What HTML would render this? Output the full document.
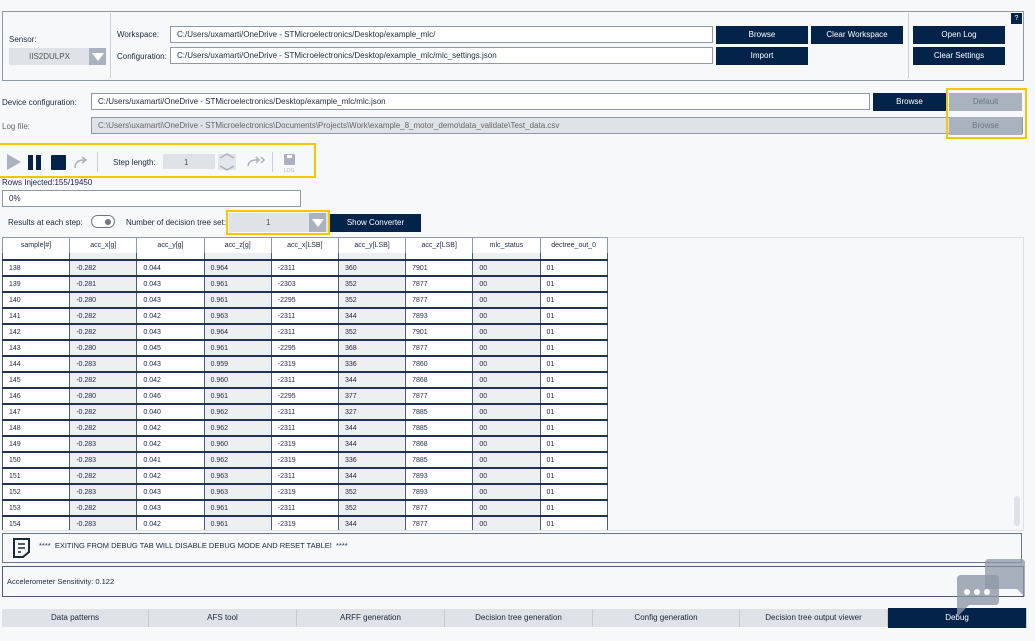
<!DOCTYPE html>
<html><head><meta charset="utf-8"><style>
*{box-sizing:border-box;margin:0;padding:0}
body{width:1035px;height:641px;background:#f7f8fa;font-family:"Liberation Sans",sans-serif;font-size:8px;color:#1a2740;position:relative;overflow:hidden}
.a{position:absolute}
.in{position:absolute;background:#fff;border:1px solid #8d98a8;height:17px;line-height:15px;padding-left:6px;font-size:8px}
.btn{position:absolute;background:#03234b;color:#fff;text-align:center;height:18px;line-height:18px;font-size:8px}
.gb{position:absolute;background:#a9b2be;color:#6b7685;text-align:center;height:18px;line-height:18px;font-size:8px}
.yl{position:absolute;border:2px solid #f9c500}
table{border-collapse:collapse;font-size:7px;table-layout:fixed;width:605px}
td{width:67.2px;height:16px;border-left:1px solid #4a5a78;border-right:1px solid #4a5a78;border-bottom:2px solid #1e3158;padding-left:6px;background:#fff;overflow:hidden;white-space:nowrap}
td:nth-child(2n){background:#eeeff1}
.th td{background:#fff;text-align:center;border:1px solid #8d98a8;height:16px;padding:0}
.tab{position:absolute;top:609px;height:18px;line-height:18px;text-align:center;background:#dfe2e6;color:#1a2740;font-size:8px;border-right:1px solid #c8ccd2}
</style></head><body>
<div class="a" style="left:2px;top:11px;width:1022px;height:70px;border:1px solid #8d98a8"></div>
<div class="a" style="left:110px;top:13px;width:1px;height:65px;background:#ccd"></div>
<div class="a" style="left:908px;top:13px;width:1px;height:65px;background:#ccd"></div>
<div class="a" style="left:9px;top:35px">Sensor:</div>
<div class="a" style="left:9px;top:48px;width:97px;height:17px;background:#dfe2e6;line-height:17px;font-size:8px;color:#555"><span style="margin-left:20px">IIS2DULPX</span><div class="a" style="left:80px;top:0;width:17px;height:17px;background:#a9b2be"><div class="a" style="left:3px;top:5px;border-left:6px solid transparent;border-right:6px solid transparent;border-top:8px solid #fff"></div></div></div>
<div class="a" style="left:117px;top:30px">Workspace:</div>
<div class="a" style="left:117px;top:52px">Configuration:</div>
<div class="in" style="left:170px;top:26px;width:543px">C:/Users/uxamarti/OneDrive - STMicroelectronics/Desktop/example_mlc/</div>
<div class="in" style="left:170px;top:47px;width:543px">C:/Users/uxamarti/OneDrive - STMicroelectronics/Desktop/example_mlc/mlc_settings.json</div>
<div class="btn" style="left:716px;top:26px;width:92px">Browse</div>
<div class="btn" style="left:811px;top:26px;width:92px">Clear Workspace</div>
<div class="btn" style="left:716px;top:47px;width:92px">Import</div>
<div class="btn" style="left:913px;top:26px;width:92px">Open Log</div>
<div class="btn" style="left:913px;top:47px;width:92px">Clear Settings</div>
<div class="btn" style="left:1011px;top:13px;width:11px;height:11px;line-height:11px;font-size:7px">?</div>
<div class="a" style="left:2px;top:98px">Device configuration:</div>
<div class="a" style="left:2px;top:122px;color:#666">Log file:</div>
<div class="in" style="left:91px;top:93px;width:779px">C:/Users/uxamarti/OneDrive - STMicroelectronics/Desktop/example_mlc/mlc.json</div>
<div class="in" style="left:91px;top:117px;width:932px;background:#dfe2e6;color:#666">C:\Users\uxamarti\OneDrive - STMicroelectronics\Documents\Projects\Work\example_8_motor_demo\data_validate\Test_data.csv</div>
<div class="btn" style="left:873px;top:93px;width:73px">Browse</div>
<div class="gb" style="left:949px;top:93px;width:73px">Default</div>
<div class="gb" style="left:949px;top:117px;width:73px">Browse</div>
<div class="yl" style="left:946px;top:88px;width:81px;height:51px"></div>
<div class="yl" style="left:-2px;top:143px;width:318px;height:35px"></div>
<svg class="a" style="left:0;top:148px" width="310" height="28">
<polygon points="7,6 7,22 21,14" fill="#a9b2be"/>
<rect x="28" y="7" width="5" height="15" fill="#03234b"/><rect x="36" y="7" width="5" height="15" fill="#03234b"/>
<rect x="51" y="7" width="15" height="15" rx="1" fill="#03234b"/>
<path d="M75 20 Q75 12 84 12 L86 12 M82 9 L86 12 L82 15" stroke="#a9b2be" stroke-width="1.5" fill="none"/>
<rect x="97" y="4" width="1" height="20" fill="#ccd"/>
<rect x="163" y="6" width="52" height="15" fill="#dfe2e6"/>
<path d="M220 10 L227 6 L234 10 M220 18 L227 22 L234 18" stroke="#a9b2be" stroke-width="1.5" fill="none"/>
<rect x="218" y="6" width="18" height="16" fill="#a9b2be" opacity=".25"/>
<path d="M248 18 Q249 12 256 12 L259 12 M256 9 L259 12 L256 15 M261 9 L264 12 L261 15" stroke="#a9b2be" stroke-width="1.5" fill="none"/>
<rect x="272" y="4" width="1" height="20" fill="#ccd"/>
<rect x="284" y="6" width="11" height="11" rx="1" fill="#a9b2be"/><rect x="287" y="7" width="5" height="3" fill="#fff"/>
<text x="284" y="24" font-size="5" fill="#a9b2be" font-family="Liberation Sans">LOG</text>
</svg>
<div class="a" style="left:113px;top:158px">Step length:</div>
<div class="a" style="left:184px;top:158px;color:#555">1</div>
<div class="a" style="left:2px;top:178px">Rows Injected:155/19450</div>
<div class="in" style="left:2px;top:190px;width:299px">0%</div>
<div class="a" style="left:8px;top:218px">Results at each step:</div>
<div class="a" style="left:91px;top:215px;width:24px;height:13px;border:1px solid #6b7685;border-radius:7px;background:#fff"><div class="a" style="left:13px;top:3px;width:6px;height:6px;border-radius:3px;background:#6b7685"></div></div>
<div class="a" style="left:126px;top:218px">Number of decision tree set:</div>
<div class="a" style="left:229px;top:213px;width:99px;height:19px;background:#dfe2e6;line-height:19px;color:#555"><span style="margin-left:37px">1</span><div class="a" style="left:80px;top:0;width:17px;height:19px;background:#a9b2be"><div class="a" style="left:3px;top:6px;border-left:6px solid transparent;border-right:6px solid transparent;border-top:8px solid #fff"></div></div></div>
<div class="yl" style="left:226px;top:210px;width:104px;height:25px"></div>
<div class="btn" style="left:330px;top:214px;width:91px;height:18px">Show Converter</div>
<div class="a" style="left:2px;top:237px;width:1022px;height:294px;border:1px solid #dfe2e6;background:#f7f8fa"></div>
<div class="a" style="left:1014px;top:496px;width:6px;height:30px;background:#dfe2e6;border-radius:3px"></div>
<div class="a" style="left:2px;top:237px">
<table class="th"><tr><td>sample[#]</td><td>acc_x[g]</td><td>acc_y[g]</td><td>acc_z[g]</td><td>acc_x[LSB]</td><td>acc_y[LSB]</td><td>acc_z[LSB]</td><td>mlc_status</td><td>dectree_out_0</td></tr></table></div>
<div class="a" style="left:2px;top:253px;height:277px;overflow:hidden;width:610px">
<table style="margin-top:-9px">
<tr><td>137</td><td>-0.283</td><td>0.044</td><td>0.961</td><td>-2319</td><td>360</td><td>7877</td><td>00</td><td>01</td></tr>
<tr><td>138</td><td>-0.282</td><td>0.044</td><td>0.964</td><td>-2311</td><td>360</td><td>7901</td><td>00</td><td>01</td></tr>
<tr><td>139</td><td>-0.281</td><td>0.043</td><td>0.961</td><td>-2303</td><td>352</td><td>7877</td><td>00</td><td>01</td></tr>
<tr><td>140</td><td>-0.280</td><td>0.043</td><td>0.961</td><td>-2295</td><td>352</td><td>7877</td><td>00</td><td>01</td></tr>
<tr><td>141</td><td>-0.282</td><td>0.042</td><td>0.963</td><td>-2311</td><td>344</td><td>7893</td><td>00</td><td>01</td></tr>
<tr><td>142</td><td>-0.282</td><td>0.043</td><td>0.964</td><td>-2311</td><td>352</td><td>7901</td><td>00</td><td>01</td></tr>
<tr><td>143</td><td>-0.280</td><td>0.045</td><td>0.961</td><td>-2295</td><td>368</td><td>7877</td><td>00</td><td>01</td></tr>
<tr><td>144</td><td>-0.283</td><td>0.043</td><td>0.959</td><td>-2319</td><td>336</td><td>7860</td><td>00</td><td>01</td></tr>
<tr><td>145</td><td>-0.282</td><td>0.042</td><td>0.960</td><td>-2311</td><td>344</td><td>7868</td><td>00</td><td>01</td></tr>
<tr><td>146</td><td>-0.280</td><td>0.046</td><td>0.961</td><td>-2295</td><td>377</td><td>7877</td><td>00</td><td>01</td></tr>
<tr><td>147</td><td>-0.282</td><td>0.040</td><td>0.962</td><td>-2311</td><td>327</td><td>7885</td><td>00</td><td>01</td></tr>
<tr><td>148</td><td>-0.282</td><td>0.042</td><td>0.962</td><td>-2311</td><td>344</td><td>7885</td><td>00</td><td>01</td></tr>
<tr><td>149</td><td>-0.283</td><td>0.042</td><td>0.960</td><td>-2319</td><td>344</td><td>7868</td><td>00</td><td>01</td></tr>
<tr><td>150</td><td>-0.283</td><td>0.041</td><td>0.962</td><td>-2319</td><td>336</td><td>7885</td><td>00</td><td>01</td></tr>
<tr><td>151</td><td>-0.282</td><td>0.042</td><td>0.963</td><td>-2311</td><td>344</td><td>7893</td><td>00</td><td>01</td></tr>
<tr><td>152</td><td>-0.283</td><td>0.043</td><td>0.963</td><td>-2319</td><td>352</td><td>7893</td><td>00</td><td>01</td></tr>
<tr><td>153</td><td>-0.282</td><td>0.043</td><td>0.961</td><td>-2311</td><td>352</td><td>7877</td><td>00</td><td>01</td></tr>
<tr><td>154</td><td>-0.283</td><td>0.042</td><td>0.961</td><td>-2319</td><td>344</td><td>7877</td><td>00</td><td>01</td></tr>
</table></div>
<div class="a" style="left:2px;top:533px;width:1020px;height:30px;border:1px solid #6b7685;background:#f7f8fa"></div>
<svg class="a" style="left:12px;top:537px" width="20" height="22"><path d="M2 2 H17 V15 L11 20 H2 Z" fill="none" stroke="#1a2740" stroke-width="2"/><path d="M6 7 H13 M6 11 H13 M6 15 H9" stroke="#1a2740" stroke-width="1.5"/></svg>
<div class="a" style="left:39px;top:541px;font-size:7.5px">****&nbsp; EXITING FROM DEBUG TAB WILL DISABLE DEBUG MODE AND RESET TABLE!&nbsp; ****</div>
<div class="a" style="left:2px;top:566px;width:1022px;height:31px;border:1px solid #4a5a78;background:#f7f8fa"></div>
<div class="a" style="left:7px;top:577px;font-size:7.5px">Accelerometer Sensitivity: 0.122</div>
<div class="tab" style="left:2px;width:147px">Data patterns</div>
<div class="tab" style="left:149px;width:148px">AFS tool</div>
<div class="tab" style="left:297px;width:148px">ARFF generation</div>
<div class="tab" style="left:445px;width:148px">Decision tree generation</div>
<div class="tab" style="left:593px;width:147px">Config generation</div>
<div class="tab" style="left:740px;width:148px">Decision tree output viewer</div>
<div class="tab" style="left:888px;width:139px;background:#03234b;color:#fff;top:608px;height:20px;line-height:20px">Debug</div>
<svg class="a" style="left:955px;top:557px" width="72" height="78"><path d="M30 6 Q30 2 34 2 H66 Q70 2 70 6 V40 L62 32 H30 Z" fill="#8d98a8" opacity=".75"/><path d="M2 22 Q2 18 6 18 H40 Q44 18 44 22 V44 Q44 48 40 48 H14 L2 60 Z" fill="#8d98a8" opacity=".8"/><circle cx="12" cy="35" r="3" fill="#fff"/><circle cx="22" cy="35" r="3" fill="#fff"/><circle cx="32" cy="35" r="3" fill="#fff"/></svg>
</body></html>
